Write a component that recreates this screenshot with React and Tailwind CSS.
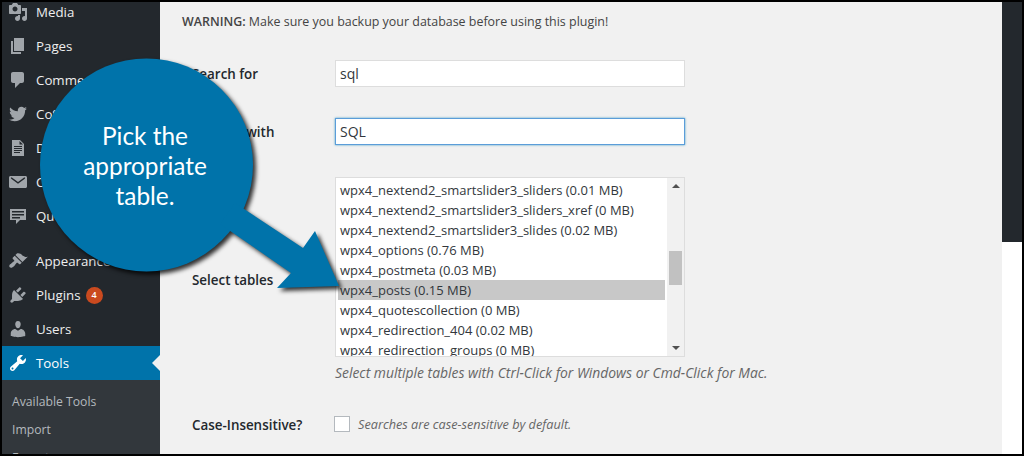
import React from "react";

const ICONS = {
  media: "M13 11V4c0-.55-.45-1-1-1h-1.67L9 1H5L3.67 3H2c-.55 0-1 .45-1 1v7c0 .55.45 1 1 1h10c.55 0 1-.45 1-1zM7 4.5c1.38 0 2.5 1.12 2.5 2.5S8.38 9.5 7 9.5 4.5 8.38 4.5 7 5.62 4.5 7 4.5zM14 6h5v10.5c0 1.38-1.12 2.5-2.5 2.5S14 17.88 14 16.5s1.12-2.5 2.5-2.5c.17 0 .34.02.5.05V9h-3V6zm-4 8.05V13h2v3.5c0 1.38-1.12 2.5-2.5 2.5S7 17.88 7 16.5 8.12 14 9.5 14c.17 0 .34.02.5.05z",
  pages: "M6 15V2h10v13H6zm-1 1h8v2H3V5h2v11z",
  comments: "M5 2h9c1.1 0 2 .9 2 2v7c0 1.1-.9 2-2 2h-2l-5 5v-5H5c-1.1 0-2-.9-2-2V4c0-1.1.9-2 2-2z",
  twitter: "M18.94 4.46c-.49.73-1.11 1.38-1.83 1.9.01.15.01.31.01.47 0 4.85-3.69 10.44-10.43 10.44-2.07 0-4-.61-5.63-1.65.29.03.58.05.88.05 1.72 0 3.3-.59 4.55-1.57-1.6-.03-2.95-1.09-3.42-2.55.22.04.45.07.69.07.33 0 .66-.05.96-.13-1.67-.34-2.94-1.82-2.94-3.6v-.04c.5.27 1.06.44 1.66.46-.98-.66-1.63-1.78-1.63-3.06 0-.67.18-1.3.5-1.84 1.81 2.22 4.51 3.68 7.56 3.83-.06-.27-.1-.55-.1-.84 0-2.02 1.65-3.66 3.67-3.66 1.06 0 2.01.44 2.68 1.16.83-.17 1.62-.47 2.33-.89-.28.85-.82 1.57-1.54 2.02.74-.09 1.44-.28 2.09-.57z",
  doc: "M12 2l4 4v12H4V2h8zM6 8v1h8V8H6zm0 2v1h8v-1H6zm0 2v1h8v-1H6zm0 2v1h6v-1H6zm5.5-11v3.5H15L11.5 3z",
  mail: "M2.5 4h15c.83 0 1.5.67 1.5 1.5v9c0 .83-.67 1.5-1.5 1.5h-15C1.67 16 1 15.33 1 14.5v-9C1 4.67 1.67 4 2.5 4zm.6 1.6c-.4.4-.2.8.1 1.1l6.8 5.1 6.8-5.1c.3-.3.5-.7.1-1.1-.4-.3-.8-.1-1.1.1L10 10 4.200 5.700c-.3-.2-.7-.4-1.100-.1z",
  quote: "M2 3h16v11h-6l-4 4v-4H2V3zm2 2v1.500h12V5H4zm0 3v1.500h12V8H4zm0 3v1.500h8V11H4z",
  appearance: "M14.48 11.06L7.41 3.99l1.5-1.5c.5-.56 2.3-.47 3.51.32 1.21.8 1.43 1.28 2.91 2.1 1.18.64 2.45 1.26 4.45.85zm-.71.71L6.7 4.7 4.93 6.47c-.39.39-.39 1.02 0 1.41l1.06 1.06c.39.39.39 1.03 0 1.42-.6.6-1.43 1.11-2.21 1.69-.35.26-.7.53-1.01.84C1.43 13.23.75 15.14 1.76 16.15s2.9.33 4.24-1.01c.31-.31.58-.66.84-1.01.58-.78 1.09-1.61 1.69-2.21.39-.39 1.03-.39 1.42 0l1.06 1.06c.39.39 1.02.39 1.41 0z",
  plugins: "M13.11 4.36L9.87 7.6 8 5.73l3.24-3.24c.35-.34 1.05-.2 1.56.32.52.51.66 1.21.31 1.55zm-8 1.77l.91-1.12 9.01 9.01-1.19.84c-.71.71-2.63 1.16-3.82 1.16H6.14L4.9 17.26c-.59.59-1.54.59-2.12 0-.59-.58-.59-1.53 0-2.12l1.24-1.24v-3.88c0-1.13.4-3.19 1.09-3.89zm7.26 3.97l3.24-3.24c.34-.35 1.04-.21 1.55.31.52.51.66 1.21.31 1.55l-3.24 3.25z",
  users: "M10 9.25c-2.27 0-2.73-3.44-2.73-3.44C7 4.02 7.82 2 9.97 2c2.16 0 2.98 2.02 2.71 3.81 0 0-.41 3.44-2.68 3.44zm0 2.57L12.72 10c2.39 0 4.52 2.33 4.52 4.53v2.49s-3.65 1.13-7.24 1.13c-3.65 0-7.24-1.13-7.24-1.13v-2.49c0-2.25 1.94-4.48 4.47-4.48z",
  tools: "M16.68 9.77c-1.34 1.34-3.3 1.67-4.95.99l-5.41 6.52c-.99.99-2.59.99-3.58 0s-.99-2.59 0-3.57l6.52-5.42c-.68-1.65-.35-3.61.99-4.95 1.28-1.28 3.12-1.62 4.72-1.06l-2.89 2.89 2.82 2.82 2.86-2.87c.53 1.58.18 3.39-1.08 4.65zM3.81 16.21c.4.39 1.04.39 1.43 0 .4-.4.4-1.04 0-1.43-.39-.4-1.03-.4-1.43 0-.39.39-.39 1.03 0 1.43z",
};

function MenuIcon({ name, className }) {
  return (
    <svg viewBox="0 0 20 20" className={`w-5 h-5 fill-current shrink-0 ${className}`}>
      <path fillRule="evenodd" d={ICONS[name]} />
    </svg>
  );
}

function MenuItem({ icon, label, children }) {
  return (
    <div className="h-[34px] flex items-center pl-[6px] gap-2 text-[13.3px] text-[#eeeeee]">
      <MenuIcon name={icon} className="text-[#a0a5aa]" />
      <span className="pt-[2px]">{label}</span>
      {children}
    </div>
  );
}

const TABLES = [
  "wpx4_nextend2_smartslider3_sliders (0.01 MB)",
  "wpx4_nextend2_smartslider3_sliders_xref (0 MB)",
  "wpx4_nextend2_smartslider3_slides (0.02 MB)",
  "wpx4_options (0.76 MB)",
  "wpx4_postmeta (0.03 MB)",
  "wpx4_posts (0.15 MB)",
  "wpx4_quotescollection (0 MB)",
  "wpx4_redirection_404 (0.02 MB)",
  "wpx4_redirection_groups (0 MB)",
];

function Sidebar() {
  return (
    <aside className="w-[158px] shrink-0 bg-[#23282d] overflow-hidden">
      <div className="-mt-[7px]">
        <MenuItem icon="media" label="Media" />
        <MenuItem icon="pages" label="Pages" />
        <MenuItem icon="comments" label="Comments" />
        <MenuItem icon="twitter" label="CoSchedule" />
        <MenuItem icon="doc" label="Docs" />
        <MenuItem icon="mail" label="Contact" />
        <MenuItem icon="quote" label="Quotes" />
        <div className="h-[11px]" />
        <MenuItem icon="appearance" label="Appearance" />
        <MenuItem icon="plugins" label="Plugins">
          <span className="-ml-[3px] w-[17px] h-[17px] rounded-full bg-[#ca4a1f] text-white text-[9px] font-semibold flex items-center justify-center">
            4
          </span>
        </MenuItem>
        <MenuItem icon="users" label="Users" />
        <div className="relative h-[34px] flex items-center pl-[6px] gap-2 text-[13.3px] text-white bg-[#0073aa]">
          <MenuIcon name="tools" className="text-white" />
          <span className="pt-[2px]">Tools</span>
          <div className="absolute right-0 top-[9px] border-y-[8px] border-r-[8px] border-y-transparent border-r-[#f1f1f1]" />
        </div>
        <div className="bg-[#32373c] pt-2 pb-2 text-[12.2px] text-[#b4b9be]">
          <div className="h-[28px] flex items-center pl-[10px]">Available Tools</div>
          <div className="h-[28px] flex items-center pl-[10px]">Import</div>
          <div className="h-[28px] flex items-center pl-[10px]">Export</div>
        </div>
      </div>
    </aside>
  );
}

function TableList() {
  return (
    <div className="w-[350px] h-[180px] border border-[#dddddd] bg-white flex overflow-hidden">
      <div className="flex-1 pt-[2px] pl-[2px] pr-[2px] overflow-hidden">
        {TABLES.map((t) => (
          <div
            key={t}
            className={`h-5 leading-5 pl-[2px] whitespace-nowrap text-[13px] text-[#32373c] ${
              t.startsWith("wpx4_posts") ? "bg-[#c8c8c8]" : ""
            }`}
          >
            {t}
          </div>
        ))}
      </div>
      <div className="w-[17px] bg-[#f1f1f1] flex flex-col items-center pt-[6px] pb-[6px]">
        <div className="border-x-[4px] border-b-[4px] border-x-transparent border-b-[#505050]" />
        <div className="mt-[63px] w-[13px] h-[34px] bg-[#c1c1c1]" />
        <div className="mt-auto border-x-[4px] border-t-[4px] border-x-transparent border-t-[#505050]" />
      </div>
    </div>
  );
}

function Main() {
  return (
    <main className="w-[842px] shrink-0 bg-[#f1f1f1] pl-[22px] text-[13.4px] text-[#444444]">
      <p className="mt-[10px] h-[19px] leading-[19px] text-[12.45px] text-[#444444]">
        <span className="font-semibold">WARNING:</span> Make sure you backup your database before using this plugin!
      </p>
      <div className="mt-[29px] pl-[10px] flex items-center">
        <label className="w-[143px] pt-[2px] font-semibold text-[#23282d]">Search for</label>
        <div className="w-[350px] h-[27px] border border-[#dddddd] bg-white pl-[4px] flex items-center text-[14px] text-[#32373c]">sql</div>
      </div>
      <div className="mt-[31px] pl-[10px] flex items-center">
        <label className="w-[143px] pt-[2px] font-semibold text-[#23282d]">Replace with</label>
        <div className="w-[350px] h-[27px] border border-[#5b9dd9] shadow-[0_0_2px_rgba(30,140,190,0.8)] bg-white pl-[4px] flex items-center text-[14px] text-[#32373c]">SQL</div>
      </div>
      <div className="mt-[32px] pl-[10px] flex items-start">
        <label className="w-[143px] mt-[93px] font-semibold text-[#23282d]">Select tables</label>
        <TableList />
      </div>
      <p className="mt-[6px] pl-[153px] h-5 leading-5 italic text-[13.9px] text-[#666666]">
        Select multiple tables with Ctrl-Click for Windows or Cmd-Click for Mac.
      </p>
      <div className="mt-[30px] pl-[10px] flex items-center">
        <label className="w-[142px] pt-[2px] font-semibold text-[#23282d]">Case-Insensitive?</label>
        <div className="w-4 h-4 border border-[#b4b9be] bg-white" />
        <span className="ml-[8px] italic text-[12.7px] text-[#666666]">Searches are case-sensitive by default.</span>
      </div>
    </main>
  );
}

function Callout() {
  return (
    <div className="absolute left-[38px] top-[56px] w-[320px] h-[250px]">
      <svg viewBox="0 0 320 250" className="w-[320px] h-[250px] drop-shadow-[3px_3px_2px_rgba(0,0,0,0.8)]">
        <circle cx="106.500" cy="107" r="106.500" fill="#0073aa" />
        <polygon points="195,145 263,190 275,173 299,228 237,230 251,215 180,166" fill="#0073aa" />
      </svg>
      <div className="absolute left-[5px] top-[63px] w-[200px] text-center text-white text-[24.4px] leading-[30px] font-['Lato',sans-serif]">
        Pick the
        <br />
        appropriate
        <br />
        table.
      </div>
    </div>
  );
}

export default function App() {
  return (
    <div className="relative w-[1024px] h-[456px] overflow-hidden border-2 border-black bg-white flex font-['Open_Sans',sans-serif]">
      <Sidebar />
      <Main />
      <div className="flex-1">
        <div className="h-[240px] bg-[#23282d]" />
      </div>
      <Callout />
    </div>
  );
}
